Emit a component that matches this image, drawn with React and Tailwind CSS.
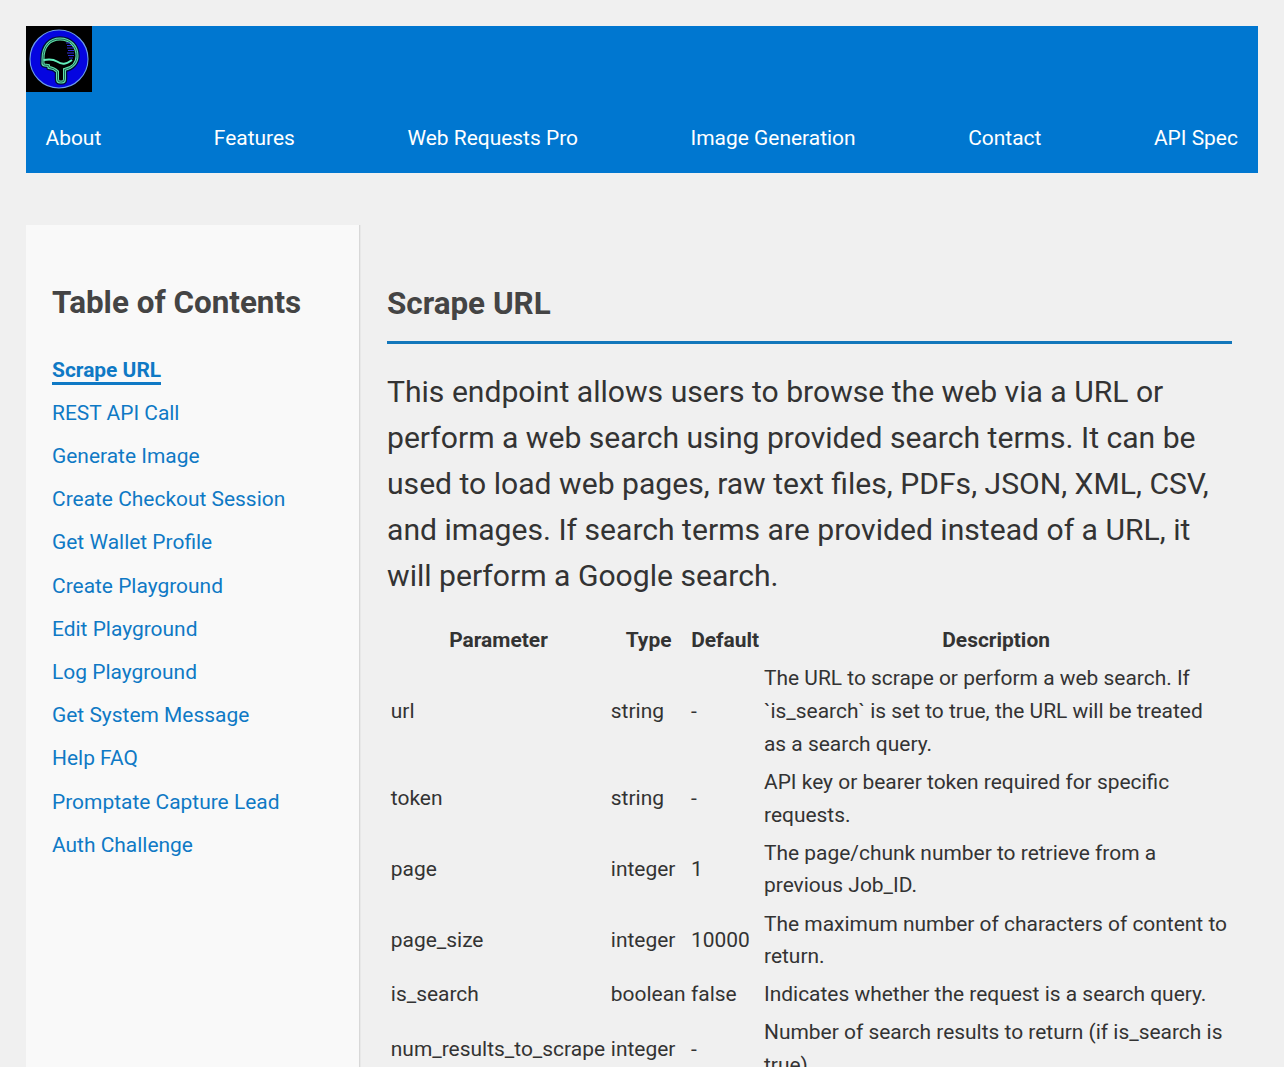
import React from "react";

const navLinks = [
  "About",
  "Features",
  "Web Requests Pro",
  "Image Generation",
  "Contact",
  "API Spec",
];

const contents = [
  "Scrape URL",
  "REST API Call",
  "Generate Image",
  "Create Checkout Session",
  "Get Wallet Profile",
  "Create Playground",
  "Edit Playground",
  "Log Playground",
  "Get System Message",
  "Help FAQ",
  "Promptate Capture Lead",
  "Auth Challenge",
];

const parameters = [
  {
    name: "url",
    type: "string",
    value: "-",
    description:
      "The URL to scrape or perform a web search. If `is_search` is set to true, the URL will be treated as a search query.",
  },
  {
    name: "token",
    type: "string",
    value: "-",
    description: "API key or bearer token required for specific requests.",
  },
  {
    name: "page",
    type: "integer",
    value: "1",
    description: "The page/chunk number to retrieve from a previous Job_ID.",
  },
  {
    name: "page_size",
    type: "integer",
    value: "10000",
    description: "The maximum number of characters of content to return.",
  },
  {
    name: "is_search",
    type: "boolean",
    value: "false",
    description: "Indicates whether the request is a search query.",
  },
  {
    name: "num_results_to_scrape",
    type: "integer",
    value: "-",
    description: "Number of search results to return (if is_search is true).",
  },
];

function Logo() {
  const head =
    "M17 33 C17 20 24 13 34 13 C45 13 51 21 51 30 C51 37 46 42 38.5 43.5 L38.5 53 Q38.5 56 36 56 L34 56 Q31.5 56 31.5 53 L31.5 45.5 Q28 42 23 41.5 L22.5 39.5 L18.5 39 Q16.5 38.5 17 36 Z";
  return (
    <svg viewBox="0 0 66 66" className="block size-[66px] bg-black" fill="none">
      <circle cx="33" cy="33" r="29" fill="#0505e0" stroke="#6d9cf0" strokeWidth="1.1" />
      <path d={head} fill="#000" stroke="#020c38" strokeWidth="5.5" />
      <path d={head} fill="#000" stroke="#5fe0aa" strokeWidth="3" />
      <path d={head} stroke="#0a3c3a" strokeWidth="0.8" />
      <path d="M17.5 34 C23 33 28 33.5 31 35.5 C36 39 40 38.5 46 34" stroke="#62f0bd" strokeWidth="2" />
      <path
        d="M40 17h4M41 19.5h5M41 22h7M42 24.5h6M41 27h7M42 29.5h6M43 32h4"
        stroke="#3030d8"
        strokeWidth="1"
      />
    </svg>
  );
}

export default function App() {
  return (
    <div className="h-[1067px] overflow-hidden bg-[#f0f0f0] px-[26px] pt-[26px] font-['Roboto',sans-serif] text-[20.95px] leading-[32.8px] text-[#333]">
      <header className="h-[147px] bg-[#0077d0]">
        <Logo />
        <nav className="flex justify-between pr-[20px] pl-[19.5px] pt-[29.5px] text-white">
          {navLinks.map((link) => (
            <a key={link} href="#">
              {link}
            </a>
          ))}
        </nav>
      </header>

      <div className="mt-[52px] flex h-[900px]">
        <aside className="w-[334px] shrink-0 border-r border-[#d8d8d8] bg-[#f9f9f9] px-[26px] pt-[53px] shadow-[1px_0_0_#e8e8e8]">
          <h2 className="text-[31.4px] leading-[50px] font-bold text-[#444]">
            Table of Contents
          </h2>
          <ul className="mt-[25.7px] text-[#0f79c5]">
            {contents.map((item, index) => (
              <li key={item} className="h-[43.2px]">
                <a
                  href="#"
                  className={
                    index === 0
                      ? "border-b-3 border-[#0f79c5] font-bold"
                      : ""
                  }
                >
                  {item}
                </a>
              </li>
            ))}
          </ul>
        </aside>

        <main className="w-[872px] pl-[27px] pt-[54px]">
          <h2 className="h-[65px] border-b-3 border-[#1377bb] text-[31.4px] leading-[50px] font-bold text-[#444]">
            Scrape URL
          </h2>
          <p className="mt-[24.5px] text-[30.12px] leading-[46px]">
            This endpoint allows users to browse the web via a URL or perform a
            web search using provided search terms. It can be used to load web
            pages, raw text files, PDFs, JSON, XML, CSV, and images. If search
            terms are provided instead of a URL, it will perform a Google
            search.
          </p>
          <table className="mt-[21.4px] w-full table-fixed border-separate border-spacing-[3px]">
            <colgroup>
              <col className="w-[217px]" />
              <col className="w-[77.2px]" />
              <col className="w-[70px]" />
              <col />
            </colgroup>
            <thead>
              <tr>
                <th className="px-[0.8px] py-[1.15px]">Parameter</th>
                <th className="px-[0.8px] py-[1.15px]">Type</th>
                <th className="px-[0.8px] py-[1.15px]">Default</th>
                <th className="px-[0.8px] py-[1.15px]">Description</th>
              </tr>
            </thead>
            <tbody>
              {parameters.map((param) => (
                <tr key={param.name}>
                  <td className="px-[0.8px] py-[1.15px]">{param.name}</td>
                  <td className="px-[0.8px] py-[1.15px]">{param.type}</td>
                  <td className="px-[0.8px] py-[1.15px]">{param.value}</td>
                  <td className="px-[0.8px] py-[1.15px]">{param.description}</td>
                </tr>
              ))}
            </tbody>
          </table>
        </main>
      </div>
    </div>
  );
}
